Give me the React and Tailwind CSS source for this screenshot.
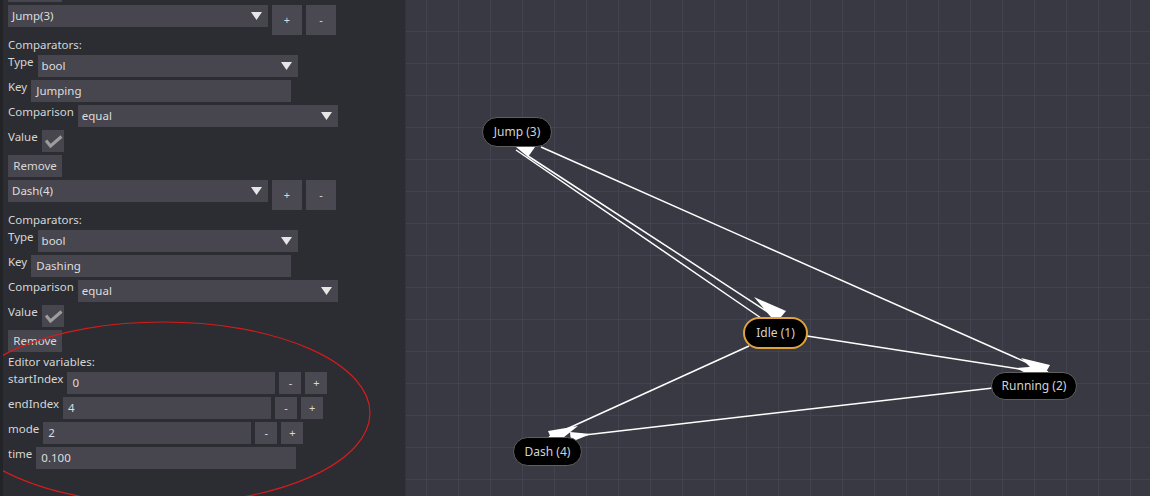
import React from 'react';

// Editor panel colours
const field = 'bg-[#47454d] text-[#dedede]';

const Label = ({ children }) => (
    <div className="h-[14px] text-[11.5px] leading-[14px] text-[#d6d6d6] whitespace-nowrap">{children}</div>
);

const Select = ({ value, width = 'w-[260px]' }) => (
    <div className={`${width} h-[22px] ${field} flex items-center justify-between pl-[4px] pr-[6px] text-[11.5px]`}>
        <span>{value}</span>
        <svg width="11" height="8" viewBox="0 0 11 8">
            <polygon points="0,0 11,0 5.5,8" fill="#e6e6e6" />
        </svg>
    </div>
);

const Input = ({ value, width = 'w-[260px]' }) => (
    <div className={`${width} h-[22px] ${field} flex items-center pl-[5px] text-[11.5px]`}>{value}</div>
);

const Btn = ({ children, size = 'w-[22px] h-[22px]' }) => (
    <div className={`${size} bg-[#4a4850] text-[#d8d8d8] text-[11px] flex items-center justify-center`}>{children}</div>
);

const Remove = () => (
    <div className="w-[54px] h-[22px] bg-[#47454d] text-[#d8d8d8] text-[11.5px] flex items-center justify-center">Remove</div>
);

const Row = ({ label, children }) => (
    <div className="flex items-start gap-[4px]">
        <Label>{label}</Label>
        {children}
    </div>
);

const Checkbox = () => (
    <div className="w-[22px] h-[22px] bg-[#47454d]">
        <svg width="22" height="22" viewBox="0 0 22 22">
            <polyline points="4,10.5 8.5,16 19.5,6.5" fill="none" stroke="#9d9d9d" strokeWidth="3" />
        </svg>
    </div>
);

const Transition = ({ state, keyName }) => (
    <>
        <div className="h-[30px] flex items-start gap-[4px]">
            <Select value={state} />
            <Btn size="w-[30px] h-[30px]">+</Btn>
            <Btn size="w-[30px] h-[30px]">-</Btn>
        </div>
        <Label>Comparators:</Label>
        <Row label="Type"><Select value="bool" /></Row>
        <Row label="Key"><Input value={keyName} /></Row>
        <Row label="Comparison"><Select value="equal" /></Row>
        <Row label="Value"><Checkbox /></Row>
        <Remove />
    </>
);

const NumberVar = ({ label, value }) => (
    <Row label={label}>
        <div className="flex gap-[4px]">
            <Input value={value} width="w-[208px]" />
            <Btn>-</Btn>
            <Btn>+</Btn>
        </div>
    </Row>
);

const nodes = [
    { name: 'Jump (3)', x: 482, y: 117, w: 70, h: 30 },
    { name: 'Idle (1)', x: 743, y: 317, w: 65, h: 32, active: true },
    { name: 'Running (2)', x: 991, y: 372, w: 86, h: 28 },
    { name: 'Dash (4)', x: 513, y: 437, w: 69, h: 29 },
];

const lines = [
    [515, 150, 760, 318],
    [527, 156, 776, 318],
    [540, 147, 1047, 372],
    [806, 336, 1038, 372],
    [748, 346, 548, 437],
    [992, 388, 575, 436],
];

const wedges = [
    '515,147 534,147 527,157',
    '753,297 775,323 785,311',
    '1020,358 1041,379 1049,365',
    '1015,368 1038,380 1041,366',
    '577,426 553,445 547,431',
    '590,434 570,442 569,432',
];

export default function App() {
    return (
        <div className="w-[1150px] h-[496px] flex overflow-hidden font-['Noto_Sans',sans-serif]">
            {/* inspector panel */}
            <div className="relative w-[405px] h-full bg-[#2b2d32] border-l-[3px] border-[#222428] overflow-hidden">
                <div className="flex flex-col gap-[3px] pl-[5px] mt-[-20px]">
                    <Remove />
                    <Transition state="Jump(3)" keyName="Jumping" />
                    <Transition state="Dash(4)" keyName="Dashing" />
                    <Label>Editor variables:</Label>
                    <NumberVar label="startIndex" value="0" />
                    <NumberVar label="endIndex" value="4" />
                    <NumberVar label="mode" value="2" />
                    <Row label="time"><Input value="0.100" /></Row>
                </div>
                <svg className="absolute left-[-3px] top-0 pointer-events-none" width="405" height="496">
                    <ellipse cx="163" cy="413" rx="207" ry="91" fill="none" stroke="#d41c1c" strokeWidth="1.2" />
                </svg>
            </div>

            {/* state graph */}
            <div className="relative flex-1 h-full bg-[#393944] border-l border-[#34343e] bg-[linear-gradient(to_right,#43434f_1px,transparent_1px),linear-gradient(to_bottom,#43434f_1px,transparent_1px)] bg-[size:32px_32px] bg-[position:20px_31px]">
                <svg className="absolute inset-0" width="745" height="496" viewBox="405 0 745 496">
                    {lines.map(([x1, y1, x2, y2], i) => (
                        <line key={i} x1={x1} y1={y1} x2={x2} y2={y2} stroke="#ffffff" strokeWidth="1.5" />
                    ))}
                    {wedges.map((p, i) => (
                        <polygon key={i} points={p} fill="#ffffff" />
                    ))}
                </svg>
                {nodes.map((n) => (
                    <div
                        key={n.name}
                        className={`absolute flex items-center justify-center rounded-full bg-black text-[12px] text-[#d2d2d2] ${n.active ? 'border-2 border-[#e0a33c]' : 'border border-[#606060]'}`}
                        style={{ left: n.x - 406, top: n.y, width: n.w, height: n.h }}
                    >
                        {n.name}
                    </div>
                ))}
            </div>
        </div>
    );
}
